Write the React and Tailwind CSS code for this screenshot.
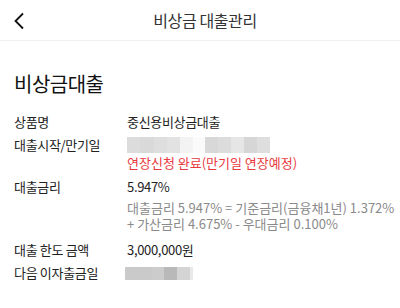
import React from 'react';

const font = { fontFamily: '"Noto Sans CJK KR", "Noto Sans", sans-serif' };

function Mosaic({ cells, h }) {
  return (
    <div className={`flex ${h}`}>
      {cells.map(([w, c], i) => (
        <div key={i} className="h-full" style={{ width: w, backgroundColor: c }} />
      ))}
    </div>
  );
}

function Row({ label, children, className = '' }) {
  return (
    <div className={`flex ${className}`}>
      <div className="w-[113px] shrink-0 text-[#222]">{label}</div>
      <div className="flex-1 min-w-0">{children}</div>
    </div>
  );
}

export default function App() {
  return (
    <div className="w-[400px] h-[308px] bg-white overflow-hidden" style={font}>
      <div className="relative h-[41px] flex items-center justify-center border-b border-[#f1f1f1]">
        <svg className="absolute left-[13px] top-[12px]" width="12" height="18" viewBox="0 0 12 18">
          <path d="M10 1.5 L2.5 9 L10 16.5" fill="none" stroke="#111" strokeWidth="1.8" />
        </svg>
        <span className="pl-[10px] text-[16px] text-[#333] tracking-tight">비상금 대출관리</span>
      </div>

      <div className="px-[14px]">
        <h1 className="mt-[29px] text-[20px] leading-[28px] text-[#111] tracking-tight">비상금대출</h1>

        <div className="mt-[13px] text-[13px] leading-[22px] tracking-tight">
          <Row label="상품명">
            <span className="text-[#222]">중신용비상금대출</span>
          </Row>
          <Row label="대출시작/만기일" className="mt-[1px]">
            <div className="pt-[3px]">
              <Mosaic
                h="h-[16px]"
                cells={[
                  [13, '#dcdcdc'], [14, '#d9d9d9'], [13, '#dedede'], [13, '#e2e2e2'],
                  [13, '#f3f3f3'], [12, '#fafafa'], [13, '#d8d8d8'], [13, '#dcdcdc'],
                  [13, '#e6e6e6'], [13, '#d6d6d6'], [13, '#dedede'],
                ]}
              />
            </div>
            <div className="text-[#e8383d] leading-[19px] tracking-normal">연장신청 완료(만기일 연장예정)</div>
          </Row>
          <Row label="대출금리" className="mt-[4px]">
            <span className="text-[#222]">5.947%</span>
            <div className="mt-[2px] text-[#8a8a8a] leading-[16px] whitespace-nowrap tracking-normal">
              <div>대출금리 5.947% = 기준금리(금융채1년) 1.372%</div>
              <div>+ 가산금리 4.675% - 우대금리 0.100%</div>
            </div>
          </Row>
          <Row label="대출 한도 금액" className="mt-[7px]">
            <span className="text-[#222]">3,000,000원</span>
          </Row>
          <Row label="다음 이자출금일" className="mt-[1px]">
            <div className="pt-[5px] -ml-[2px]">
              <Mosaic
                h="h-[13px]"
                cells={[
                  [27, '#cacaca'], [12, '#cccccc'], [13, '#b9b9b9'], [13, '#d4d4d4'], [3, '#e9e9e9'],
                ]}
              />
            </div>
          </Row>
        </div>
      </div>
    </div>
  );
}
